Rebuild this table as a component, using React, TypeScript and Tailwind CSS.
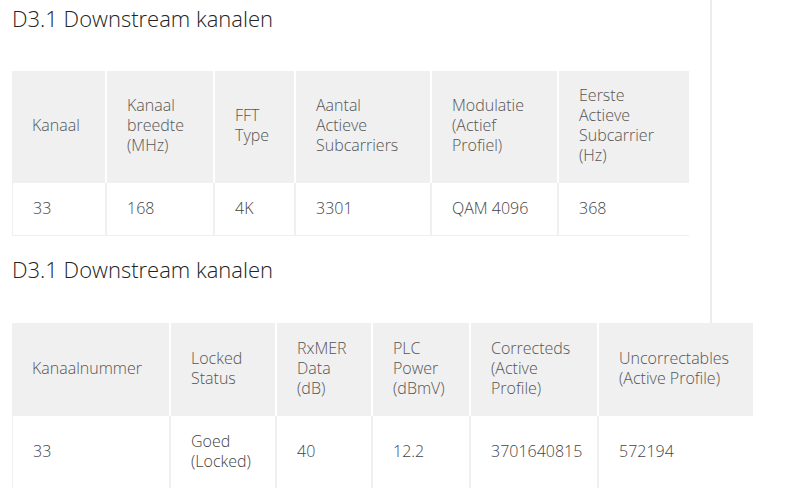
const font = { fontFamily: "'Open Sans', Lato, sans-serif" };

type Table = {
  widths: number[];
  head: string[][];
  body: string[][];
};

const tables: Table[] = [
  {
    widths: [93, 106, 79, 134, 125, 130],
    head: [
      ["Kanaal"],
      ["Kanaal", "breedte", "(MHz)"],
      ["FFT", "Type"],
      ["Aantal", "Actieve", "Subcarriers"],
      ["Modulatie", "(Actief", "Profiel)"],
      ["Eerste", "Actieve", "Subcarrier", "(Hz)"],
    ],
    body: [["33"], ["168"], ["4K"], ["3301"], ["QAM 4096"], ["368"]],
  },
  {
    widths: [157, 104, 94, 96, 126, 154],
    head: [
      ["Kanaalnummer"],
      ["Locked", "Status"],
      ["RxMER", "Data", "(dB)"],
      ["PLC", "Power", "(dBmV)"],
      ["Correcteds", "(Active", "Profile)"],
      ["Uncorrectables", "(Active Profile)"],
    ],
    body: [["33"], ["Goed", "(Locked)"], ["40"], ["12.2"], ["3701640815"], ["572194"]],
  },
];

function ChannelTable({ t, headPy }: { t: Table; headPy: string }) {
  return (
    <div className="flex flex-col w-max">
      <div className="flex gap-[2px] bg-white">
        {t.head.map((lines, i) => (
          <div
            key={i}
            className={`flex flex-col justify-center bg-[#f0f0f0] px-5 ${headPy} text-[16px] leading-5 font-light text-[#555]`}
            style={{ width: t.widths[i] }}
          >
            {lines.map((l) => (
              <span key={l} className="whitespace-nowrap">{l}</span>
            ))}
          </div>
        ))}
      </div>
      <div className="flex gap-[2px] bg-[#efeff2] pb-[1px] pl-[1px]">
        {t.body.map((lines, i) => (
          <div
            key={i}
            className="flex flex-col justify-center bg-white px-5 pt-[15px] pb-[17px] text-[16px] leading-5 font-light text-[#444]"
            style={{ width: i === 0 ? t.widths[i] - 1 : t.widths[i] }}
          >
            {lines.map((l) => (
              <span key={l} className="whitespace-nowrap">{l}</span>
            ))}
          </div>
        ))}
      </div>
    </div>
  );
}

export default function App() {
  return (
    <div className="w-[800px] h-[488px] overflow-hidden bg-white" style={font}>
      <div className="w-[712px] h-full border-r-2 border-[#ececec] pl-3">
        <h2 className="pt-[4px] text-[22px] leading-7 font-light text-[#222]">D3.1 Downstream kanalen</h2>
        <div className="mt-[39px]">
          <ChannelTable t={tables[0]} headPy="pt-[14px] pb-[18px]" />
        </div>
        <h2 className="mt-[19px] text-[22px] leading-7 font-light text-[#222]">D3.1 Downstream kanalen</h2>
        <div className="mt-[40px]">
          <ChannelTable t={tables[1]} headPy="pt-[15px] pb-[18px]" />
        </div>
      </div>
    </div>
  );
}
